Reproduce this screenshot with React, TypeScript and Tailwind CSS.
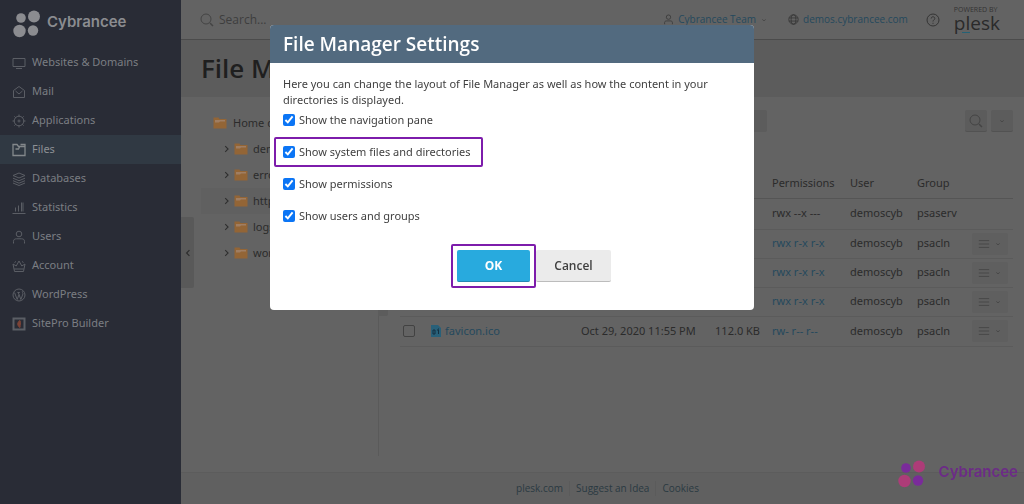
import type { ReactNode } from "react"

const NAV_ITEMS = [
  { label: "Websites & Domains", icon: <path d="M1 2.5h12v8H1zM4 12.5h6" /> },
  { label: "Mail", icon: <path d="M1.5 5.5 7 1.5l5.5 4v7h-11zM3.5 6 7 9l3.5-3" /> },
  {
    label: "Applications",
    icon: (
      <>
        <circle cx="7" cy="7" r="4.8" />
        <circle cx="7" cy="7" r="1" />
        <path d="M7 .5v2M7 11.5v2M.5 7h2M11.5 7h2M2.4 2.4l1.4 1.4M10.2 10.2l1.4 1.4M11.6 2.4l-1.4 1.4M3.8 10.2l-1.4 1.4" />
      </>
    ),
  },
  { label: "Files", icon: <path d="M1 12.5v-11h4l1.5 2H13v9zM3.5 6h3l1-2M8.5 1.5H13v2" strokeWidth="1.3" /> },
  {
    label: "Databases",
    icon: <path d="M7 1 13 3.5 7 6 1 3.5zM1 6.2l6 2.5 6-2.5M1 8.7l6 2.5 6-2.5M1 11l6 2.5 6-2.5" />,
  },
  { label: "Statistics", icon: <path d="M.5 12.5h13M3.5 10.5v-4M6.5 10.5v-6M9.5 10.5v-9M11 10.5v-9" /> },
  {
    label: "Users",
    icon: (
      <>
        <circle cx="7" cy="4" r="2.8" />
        <path d="M1.5 13.5v-2c0-2 1.2-2.7 3-2.7h5c1.8 0 3 .7 3 2.7v2" />
      </>
    ),
  },
  {
    label: "Account",
    icon: <path d="M2.5 12.5 1 5l3.2 2L7 2l2.8 5L13 5l-1.5 7.5zM2.2 10h9.6M2.5 3.5 4 2.5M10 2.5l1.5 1" />,
  },
  {
    label: "WordPress",
    icon: (
      <>
        <circle cx="7" cy="7" r="6" />
        <path d="m2.5 4.5 2.7 7L7 6.5 6.2 4.5M5.5 4.5h2.3M7 6.5l1.9 5 2-5.5c.3-1-.8-1.5-.6-2.7" />
      </>
    ),
  },
  {
    label: "SitePro Builder",
    icon: (
      <>
        <path d="M1.5 1.5h11v11h-11z" strokeWidth="2" />
        <path d="M8 3.5C5 5 5 9 8 10.5 8 8 9 6 8 3.5z" fill="#7d4336" stroke="#7d4336" />
      </>
    ),
  },
]

const FOLDERS = ["demos", "error_docs", "httpdocs", "logs", "wordpress-backups"]

const FILES = [
  { name: "", date: "", size: "", permissions: "rwx --x ---", group: "psaserv" },
  { name: "css", date: "", size: "", permissions: "rwx r-x r-x", group: "psacln" },
  { name: "img", date: "", size: "", permissions: "rwx r-x r-x", group: "psacln" },
  { name: "test", date: "", size: "", permissions: "rwx r-x r-x", group: "psacln" },
  {
    name: "favicon.ico",
    date: "Oct 29, 2020 11:55 PM",
    size: "112.0 KB",
    permissions: "rw- r-- r--",
    group: "psacln",
  },
]

const SETTINGS = [
  { id: "nav-pane", label: "Show the navigation pane" },
  { id: "system-files", label: "Show system files and directories", highlighted: true },
  { id: "permissions", label: "Show permissions" },
  { id: "users-groups", label: "Show users and groups" },
]

const Icon = ({ children, className = "size-3.5" }: { children: ReactNode; className?: string }) => (
  <svg viewBox="0 0 14 14" fill="none" stroke="currentColor" className={`shrink-0 ${className}`} aria-hidden="true">
    {children}
  </svg>
)

const SearchIcon = () => (
  <Icon className="size-3.5 text-[#444444]">
    <circle cx="6" cy="6" r="5" />
    <path d="m10 10 3 3" strokeWidth="1.5" />
  </Icon>
)

const Caret = () => (
  <Icon className="size-2 text-[#444444]">
    <path d="m4 6 3 2.5L10 6" strokeWidth="1.5" />
  </Icon>
)

const FolderIcon = () => (
  <svg viewBox="0 0 14 12" className="h-3 w-3.5 shrink-0" aria-hidden="true">
    <path d="M.5 11.5V.5h5l1 1.5h7v9.5z" fill="#936536" />
    <path d="M2 5.5V3h10v1.5H7l-1 1z" fill="#a07e62" />
  </svg>
)

const LogoMark = ({ first, second }: { first: string; second: string }) => (
  <svg viewBox="0 0 27 28" className="h-7 w-[27px] shrink-0" aria-hidden="true">
    <circle cx="8" cy="8" r="4.8" fill={first} />
    <circle cx="21" cy="6.5" r="6" fill={second} />
    <circle cx="6.5" cy="21" r="6.2" fill={second} />
    <circle cx="20" cy="20.5" r="5.2" fill={first} />
  </svg>
)

const Sidebar = () => (
  <aside className="w-[181px] shrink-0 bg-[#292c36] text-[#7b7e83]">
    <a href="#" className="flex h-12 items-center gap-[7px] pl-[13px] text-[#8b8c90]">
      <LogoMark first="#8b8c90" second="#8b8c90" />
      <span className="pb-1 font-[Inter] text-[15px] font-semibold">Cybrancee</span>
    </a>
    <nav>
      {NAV_ITEMS.map((item) => (
        <a
          key={item.label}
          href="#"
          className={`flex h-[29px] items-center gap-[6px] pl-3 ${
            item.label === "Files" ? "bg-[#303943] text-[#8c9094]" : ""
          }`}
        >
          <Icon className={item.label === "Files" ? "size-3.5 text-[#83888b]" : "size-3.5 text-[#5b5e65]"}>
            {item.icon}
          </Icon>
          {item.label}
        </a>
      ))}
    </nav>
  </aside>
)

const TopBar = () => (
  <header className="flex h-10 items-center border-b border-[#4b4b4b] pr-6 pl-[19px] font-['Open_Sans',sans-serif]">
    <label className="flex flex-1 items-center gap-[5px]">
      <SearchIcon />
      <input
        type="search"
        aria-label="Search"
        placeholder="Search..."
        className="w-28 bg-transparent text-xs outline-none placeholder:text-[#3e3e3e]"
      />
    </label>
    <a href="#" className="flex items-center gap-1 text-[10px] text-[#25495d]">
      <Icon className="size-[11px] text-[#383838]">
        <circle cx="7" cy="4" r="2.8" />
        <path d="M2 13v-2c0-1.5 1-2.2 2.5-2.2h5c1.5 0 2.5.7 2.5 2.2v2" />
      </Icon>
      Cybrancee Team
      <Caret />
    </a>
    <a href="#" className="ml-5 flex items-center gap-1 text-[10px] text-[#25495d]">
      <Icon className="size-[11px] text-[#333333]">
        <circle cx="7" cy="7" r="6" />
        <ellipse cx="7" cy="7" rx="3" ry="6" />
        <path d="M1.5 5h11M1.5 9h11" />
      </Icon>
      demos.cybrancee.com
    </a>
    <button type="button" aria-label="Help" className="ml-[18px] text-[#343434]">
      <Icon>
        <circle cx="7" cy="7" r="6" />
        <path d="M5.2 5.5c0-2.3 3.6-2.3 3.6 0C8.8 6.8 7 7 7 8.5M7 9.8v1" />
      </Icon>
    </button>
    <a href="#" className="relative ml-[14px] flex flex-col text-[#2a2a2a]">
      <span className="text-[7px] leading-[7px] text-[#333333]">POWERED BY</span>
      <span className="text-[19px] leading-5 font-medium">plesk</span>
      <span className="absolute bottom-0 left-2 h-px w-2 bg-[#246276]" />
    </a>
  </header>
)

const FolderTree = () => (
  <aside className="relative w-[198px] shrink-0 border-r border-[#5a5a5a] pt-[13px] pl-5">
    <div className="flex h-[26px] items-center gap-[6px] overflow-hidden pl-3 whitespace-nowrap">
      <FolderIcon />
      Home directory
    </div>
    <ul>
      {FOLDERS.map((folder) => (
        <li
          key={folder}
          className={`flex h-[26px] items-center gap-[5px] overflow-hidden pl-[21px] whitespace-nowrap ${
            folder === "httpdocs" ? "bg-[#606060]" : ""
          }`}
        >
          <Icon className="-mr-[3px] size-2.5 text-[#2f2f2f]">
            <path d="m4.5 3 4 4-4 4" strokeWidth="1.5" />
          </Icon>
          <FolderIcon />
          {folder}
        </li>
      ))}
    </ul>
    <button
      type="button"
      aria-label="Collapse tree"
      className="absolute top-[148px] left-full h-[71px] w-2.5 rounded-r-xs bg-[#5c5c5c]"
    />
  </aside>
)

const FileTable = () => (
  <table className="mt-9 w-full table-fixed text-left">
    <colgroup>
      <col className="w-[31px]" />
      <col />
      <col className="w-[128px]" />
      <col className="w-[63px]" />
      <col className="w-[78px]" />
      <col className="w-[67px]" />
      <col className="w-[55px]" />
      <col className="w-[41px]" />
    </colgroup>
    <thead>
      <tr className="h-[30px] border-b border-[#555555]">
        <th />
        <th />
        <th />
        <th />
        <th className="font-normal">Permissions</th>
        <th className="font-normal">User</th>
        <th className="font-normal">Group</th>
        <th />
      </tr>
    </thead>
    <tbody>
      {FILES.map((file, index) => (
        <tr key={index} className="h-[29px] border-b border-[#5b5b5b] first:h-[31px] last:h-[30px]">
          <td className="pl-[3px]">
            {file.name && (
              <input
                type="checkbox"
                aria-label={`Select ${file.name}`}
                className="block size-3 appearance-none rounded-xs border border-[#424242]"
              />
            )}
          </td>
          <td>
            {file.name && (
              <a href="#" className="flex items-center gap-1 text-[#25495d]">
                <svg viewBox="0 0 10 12" className="h-3 w-2.5" aria-hidden="true">
                  <path d="M0 0h7l3 3v9H0z" fill="#286079" />
                  <path d="M2 5h2v4H2zM6 5h1.5v4M7.5 3.5v1" fill="none" stroke="#152f40" />
                </svg>
                {file.name}
              </a>
            )}
          </td>
          <td className="whitespace-nowrap">{file.date}</td>
          <td className="pr-3 text-right whitespace-nowrap">{file.size}</td>
          <td className={file.name ? "text-[#25495d]" : ""}>{file.permissions}</td>
          <td>demoscyb</td>
          <td>{file.group}</td>
          <td>
            {file.name && (
              <button
                type="button"
                aria-label={`Actions for ${file.name}`}
                className="flex h-[22px] w-9 items-center justify-center gap-1 rounded-xs bg-[#5f5f5f] text-[#454545]"
              >
                <Icon className="size-3">
                  <path d="M1 3h12M1 7h12M1 11h12" />
                </Icon>
                <Caret />
              </button>
            )}
          </td>
        </tr>
      ))}
    </tbody>
  </table>
)

const FileManager = () => (
  <section className="min-w-0 flex-1 pt-[13px] pr-[11px] pl-[21px]">
    <div className="flex justify-end gap-1">
      <div className="mr-[194px] h-[22px] w-20 rounded-xs bg-[#5c5c5c]" />
      <button
        type="button"
        aria-label="Search files"
        className="flex size-[22px] items-center justify-center rounded-xs border-b border-[#525252] bg-[#5c5c5c]"
      >
        <SearchIcon />
      </button>
      <button
        type="button"
        aria-label="Search options"
        className="flex size-[22px] items-center justify-center rounded-xs border-b border-[#525252] bg-[#5c5c5c]"
      >
        <Caret />
      </button>
    </div>
    <FileTable />
  </section>
)

const SettingsDialog = () => (
  <div className="fixed inset-0 flex items-start justify-center pt-[25px]">
    <form
      role="dialog"
      aria-labelledby="settings-title"
      className="w-[484px] overflow-hidden rounded-sm bg-white text-[#3f3f3f]"
    >
      <h2
        id="settings-title"
        className="flex h-[38px] items-center bg-[#526a7f] px-[13px] font-['Open_Sans',sans-serif] text-[19px] font-semibold text-white"
      >
        File Manager Settings
      </h2>
      <div className="px-[13px] pt-[13px] pb-[22px]">
        <p className="leading-4">
          Here you can change the layout of File Manager as well as how the content in your directories is displayed.
        </p>
        <div className="-mx-[9px] -mt-[3px] flex flex-col items-start gap-0.5">
          {SETTINGS.map((setting) => (
            <label
              key={setting.id}
              htmlFor={setting.id}
              className={`flex h-[30px] items-center gap-1 rounded-xs border-2 pr-2.5 pl-[7px] ${
                setting.highlighted ? "border-[#7d1cab]" : "border-transparent"
              }`}
            >
              <input id={setting.id} type="checkbox" defaultChecked className="size-3 accent-[#0b75f5]" />
              {setting.label}
            </label>
          ))}
        </div>
        <div className="mt-[13px] flex items-center pl-[168px] font-['Open_Sans',sans-serif] text-xs">
          <div className="rounded-xs border-2 border-[#7d1cab] p-1">
            <button
              type="submit"
              className="block h-8 w-[73px] rounded-xs border-b border-[#2389b4] bg-[#28aade] font-bold text-white"
            >
              OK
            </button>
          </div>
          <button
            type="button"
            className="h-8 w-[75px] rounded-xs border-b border-[#bcbcbc] bg-[#ebebeb] font-semibold"
          >
            Cancel
          </button>
        </div>
      </div>
    </form>
  </div>
)

export default function App() {
  return (
    <div className="flex min-h-screen bg-[#636363] font-['Noto_Sans',sans-serif] text-[11px] text-[#2b2b2b]">
      <Sidebar />
      <main className="relative flex min-w-0 flex-1 flex-col">
        <TopBar />
        <div className="flex h-[57px] items-center bg-[#5c5c5c] px-5">
          <h1 className="font-['Open_Sans',sans-serif] text-[26px] font-semibold text-[#1f1f1f]">File Manager</h1>
        </div>
        <div className="flex flex-1 pb-4">
          <FolderTree />
          <FileManager />
        </div>
        <button
          type="button"
          aria-label="Collapse sidebar"
          className="absolute top-[217px] left-0 flex h-[71px] w-[13px] items-center justify-center rounded-r-xs bg-[#595959]"
        >
          <Icon className="size-2.5">
            <path d="M9 3 5 7l4 4" strokeWidth="1.5" />
          </Icon>
        </button>
        <footer className="flex h-8 items-center justify-center border-t border-[#5c5c5c] bg-[#606060] pl-[10px] font-['Open_Sans',sans-serif] text-[10px] text-[#2b3a42]">
          <a href="#" className="border-r border-[#5b5b5b] pr-1.5">plesk.com</a>
          <a href="#" className="border-r border-[#5b5b5b] px-1.5">Suggest an Idea</a>
          <a href="#" className="pl-1.5">Cookies</a>
        </footer>
      </main>
      <SettingsDialog />
      <div className="fixed right-[6px] bottom-4 flex items-center gap-3.5 text-[#6c2b87]">
        <LogoMark first="#7a2b9a" second="#ad3c78" />
        <span className="pb-1 font-[Inter] text-[15px] font-semibold">Cybrancee</span>
      </div>
    </div>
  )
}
